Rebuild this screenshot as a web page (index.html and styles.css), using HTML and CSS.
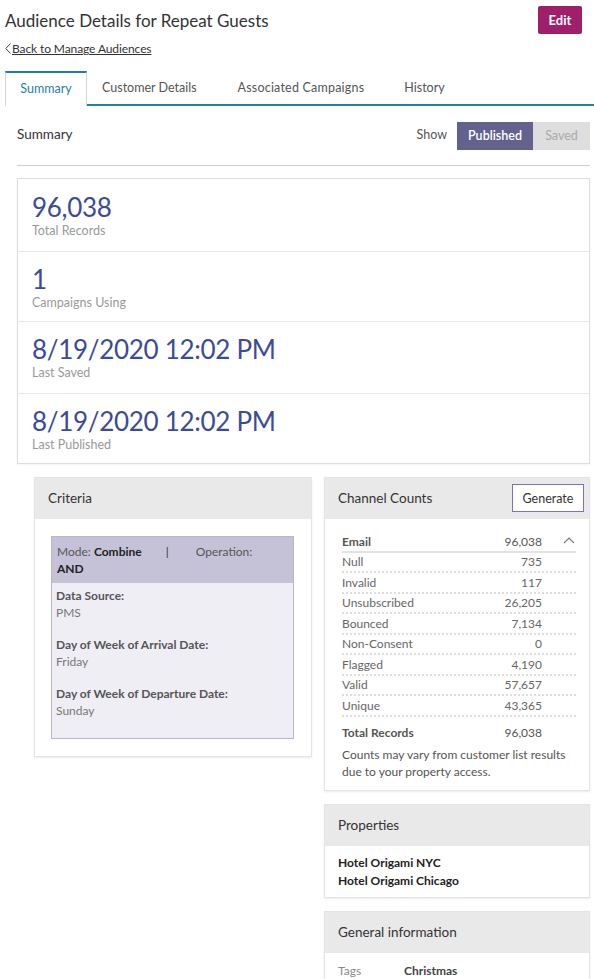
FILE: index.html
```html
<!DOCTYPE html>
<html lang="en">
<head>
  <meta charset="UTF-8">
  <meta name="viewport" content="width=device-width, initial-scale=1.0">
  <title>Audience Details</title>
  <link rel="stylesheet" href="styles.css">
</head>
<body>
  <div class="page-head">
    <div class="title-row">
      <h1>Audience Details for Repeat Guests</h1>
      <button class="btn-edit">Edit</button>
    </div>
    <a class="back-link" href="#"><svg class="chev" width="6" height="11" viewBox="0 0 6 11"><path d="M5.5 0.5 L0.8 5.5 L5.5 10.5" fill="none" stroke="#444" stroke-width="1"/></svg>Back to Manage Audiences</a>
  </div>

  <div class="tabs">
    <div class="tab active">Summary</div>
    <div class="tab">Customer Details</div>
    <div class="tab">Associated Campaigns</div>
    <div class="tab">History</div>
    <div class="tab-fill"></div>
  </div>

  <div class="content">
    <div class="summary-bar">
      <span class="summary-title">Summary</span>
      <div class="show">
        <span>Show</span>
        <div class="toggle">
          <button class="on">Published</button>
          <button>Saved</button>
        </div>
      </div>
    </div>

    <div class="stats">
      <div class="stat"><div class="num">96,038</div><div class="lbl">Total Records</div></div>
      <div class="stat"><div class="num">1</div><div class="lbl">Campaigns Using</div></div>
      <div class="stat"><div class="num">8/19/2020 12:02 PM</div><div class="lbl">Last Saved</div></div>
      <div class="stat"><div class="num">8/19/2020 12:02 PM</div><div class="lbl">Last Published</div></div>
    </div>

    <div class="cols">
      <div class="col">
        <div class="panel">
          <div class="panel-head">Criteria</div>
          <div class="panel-body criteria-body">
            <div class="crit">
              <div class="crit-head">Mode: <b>Combine</b><span class="pipe">|</span>Operation:<br><b>AND</b></div>
              <div class="crit-body">
                <dl>
                  <dt>Data Source:</dt><dd>PMS</dd>
                  <dt>Day of Week of Arrival Date:</dt><dd>Friday</dd>
                  <dt>Day of Week of Departure Date:</dt><dd>Sunday</dd>
                </dl>
              </div>
            </div>
          </div>
        </div>
      </div>

      <div class="col">
        <div class="panel">
          <div class="panel-head">Channel Counts <button class="btn-gen">Generate</button></div>
          <div class="panel-body counts-body">
            <div class="counts">
              <div class="row head"><span>Email</span><span>96,038</span></div>
              <div class="row"><span>Null</span><span>735</span></div>
              <div class="row"><span>Invalid</span><span>117</span></div>
              <div class="row"><span>Unsubscribed</span><span>26,205</span></div>
              <div class="row"><span>Bounced</span><span>7,134</span></div>
              <div class="row"><span>Non-Consent</span><span>0</span></div>
              <div class="row"><span>Flagged</span><span>4,190</span></div>
              <div class="row"><span>Valid</span><span>57,657</span></div>
              <div class="row"><span>Unique</span><span>43,365</span></div>
              <div class="row total"><span>Total Records</span><span>96,038</span></div>
              <svg class="caret" width="12" height="8" viewBox="0 0 12 8"><path d="M1 7 L6 2 L11 7" fill="none" stroke="#777" stroke-width="1.1"/></svg>
            </div>
            <p class="note">Counts may vary from customer list results due to your property access.</p>
          </div>
        </div>

        <div class="panel">
          <div class="panel-head">Properties</div>
          <div class="panel-body props">
            <div>Hotel Origami NYC</div>
            <div>Hotel Origami Chicago</div>
          </div>
        </div>

        <div class="panel">
          <div class="panel-head">General information</div>
          <div class="panel-body info">
            <span class="k">Tags</span><span class="v">Christmas</span>
          </div>
        </div>
      </div>
    </div>
  </div>
</body>
</html>
```

FILE: styles.css
```css
:root {
  --teal: #1f7fa5;
  --magenta: #9e1f6a;
  --purple: #63628f;
  --blue-num: #3b4b9a;
  --text: #333333;
  --muted: #888888;
  --head-bg: #e9e9e9;
  --font: Lato, "Liberation Sans", sans-serif;
}
* { box-sizing: border-box; margin: 0; padding: 0; }
html, body { background: #fff; font-family: var(--font); color: var(--text); }
body { width: 594px; overflow: hidden; }

/* Header */
.page-head { padding: 5px 12px 0 5px; }
.title-row { display: flex; justify-content: space-between; align-items: center; height: 30px; }
h1 { font-size: 17px; font-weight: 400; }
.btn-edit {
  background: var(--magenta);
  color: #fff;
  border: none;
  border-radius: 2px;
  width: 44px;
  height: 28px;
  font-family: var(--font);
  font-weight: 700;
  font-size: 13px;
}
.back-link {
  display: inline-flex;
  align-items: center;
  gap: 1px;
  margin-top: 6px;
  font-size: 12px;
  color: var(--text);
  text-decoration: underline;
  letter-spacing: -0.1px;
}
.back-link .chev { margin-top: -1px; }

/* Tabs */
.tabs { display: flex; margin: 14px 0 0 5px; height: 35px; }
.tab {
  font-size: 12.5px;
  color: #555;
  padding: 9px 0 0 0;
  border-bottom: 2px solid var(--teal);
}
.tab:nth-child(2) { padding-left: 15px; padding-right: 41px; }
.tab:nth-child(3) { padding-right: 40px; letter-spacing: 0.2px; }
.tab:nth-child(4) { padding-right: 0; }
.tab.active {
  color: var(--teal);
  width: 82px;
  text-align: center;
  border: 1px solid #d6d6d6;
  border-top: 2px solid var(--teal);
  border-bottom: none;
  padding-top: 8px;
}
.tab-fill { flex: 1; border-bottom: 2px solid var(--teal); }

/* Summary bar */
.content { padding: 0 4px 0 17px; }
.summary-bar {
  display: flex;
  justify-content: space-between;
  align-items: center;
  height: 60px;
  border-bottom: 1px solid #cfcfcf;
  padding-bottom: 2px;
}
.summary-title { font-size: 13.5px; }
.show { display: flex; align-items: center; gap: 10px; font-size: 12.5px; color: #555; }
.toggle { display: flex; height: 28px; margin-top: 3px; }
.toggle button {
  border: none;
  font-family: var(--font);
  font-size: 12.5px;
  background: #dedede;
  color: #aaa;
  padding: 0 10px;
  height: 28px;
}
.toggle button.on { background: var(--purple); color: #fff; font-weight: 600; width: 76px; }
.toggle button:last-child { width: 57px; }

/* Stats */
.stats {
  margin-top: 12px;
  background: #e6e6e6;
  border: 1px solid #dedede;
  display: flex;
  flex-direction: column;
  gap: 1px;
  box-shadow: 0 1px 2px rgba(0,0,0,0.05);
}
.stat { background: #fff; padding: 12px 14px 0; }
.stat:nth-child(1) { height: 72px; padding-top: 13px; }
.stat:nth-child(2) { height: 69px; }
.stat:nth-child(3) { height: 71px; }
.stat:nth-child(4) { height: 69px; }
.num { font-size: 26px; color: var(--blue-num); line-height: 30px; letter-spacing: -0.3px; }
.lbl { font-size: 12.5px; color: #999; margin-top: 1px; }

/* Columns */
.cols { display: grid; grid-template-columns: 278px 266px; gap: 12px; padding: 13px 0 0 17px; align-items: start; }
.col { display: flex; flex-direction: column; gap: 13px; }
.panel { border: 1px solid #e4e4e4; box-shadow: 0 1px 2px rgba(0,0,0,0.08); background: #fff; }
.panel-head {
  background: var(--head-bg);
  height: 41px;
  padding: 0 5px 0 13px;
  display: flex;
  align-items: center;
  justify-content: space-between;
  font-size: 13.5px;
  color: #333;
}
.btn-gen {
  background: #fff;
  border: 1px solid #7673c8;
  height: 28px;
  width: 72px;
  font-family: var(--font);
  font-size: 12.5px;
  color: #333;
}

/* Criteria */
.criteria-body { padding: 17px 17px 17px 16px; }
.crit { border: 1px solid #b9b6d3; }
.crit-head {
  background: #c5c2d8;
  padding: 6px 5px 6px 5px;
  font-size: 12px;
  color: #555;
  line-height: 17px;
}
.crit-head b { color: #222; }
.pipe { margin: 0 27px 0 24px; color: #333; }
.crit-body { background: #f0eef5; padding: 4px 4px 19px; }
dt { font-weight: 700; font-size: 12px; color: #555; line-height: 17px; }
dd { font-size: 12px; color: #777; line-height: 17px; margin-bottom: 15px; }
dd:last-child { margin-bottom: 0; }

/* Channel counts */
.counts-body { padding: 14px 13px 10px 17px; }
.counts { position: relative; padding-right: 13px; }
.caret { position: absolute; right: 1px; top: 3px; }
.row {
  display: flex;
  justify-content: space-between;
  font-size: 12px;
  color: #666;
  height: 20.5px;
  align-items: center;
  padding-right: 34px;
  margin-right: -13px;
  border-bottom: 2px dotted #dedede;
}
.row.head { font-weight: 700; color: #555; border-bottom: 2px solid #e3e3e3; height: 20px; }
.row.head span:last-child { font-weight: 400; }
.row.total { font-weight: 700; color: #555; border-bottom: none; height: 27px; padding-top: 4px; }
.row.total span:last-child { font-weight: 400; }
.note { font-size: 12px; color: #555; line-height: 17px; margin-top: 2px; }

/* Properties */
.props { padding: 8px 13px 7px; font-size: 12px; font-weight: 700; color: #222; line-height: 18px; }

/* General info */
.info { padding: 10px 13px 12px; font-size: 12px; display: flex; }
.info .k { color: #888; width: 66px; }
.info .v { font-weight: 700; color: #444; }
```
